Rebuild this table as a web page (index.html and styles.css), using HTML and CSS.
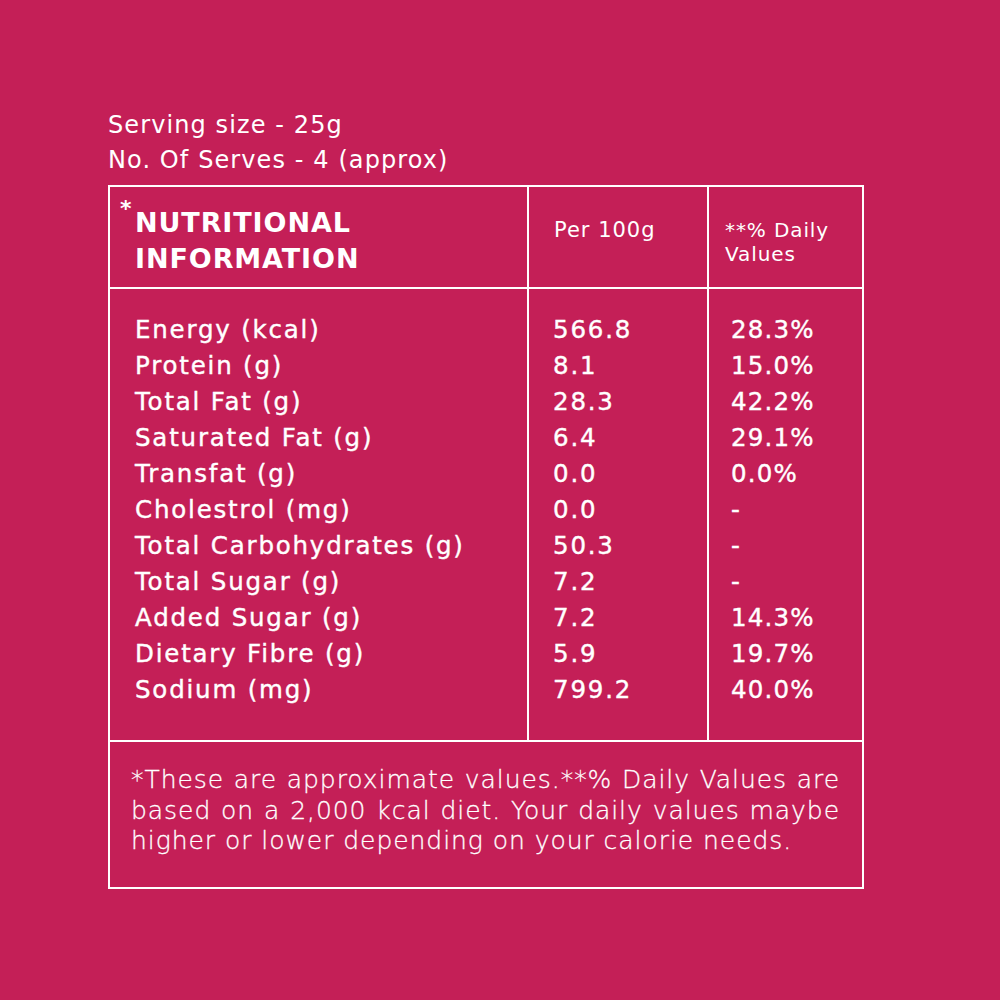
FILE: index.html
```html
<!DOCTYPE html>
<html>
<head>
<meta charset="utf-8">
<link rel="stylesheet" href="styles.css">
</head>
<body>
<div class="page">
  <div class="serving">
    <div>Serving size - 25g</div>
    <div>No. Of Serves - 4 (approx)</div>
  </div>
  <div class="panel">
    <div class="row head">
      <div class="cell c1"><span class="star">*</span><span class="title">NUTRITIONAL<br>INFORMATION</span></div>
      <div class="cell c2"><span class="sub">Per 100g</span></div>
      <div class="cell c3"><span class="sub dv">**% Daily<br>Values</span></div>
    </div>
    <div class="row body">
      <div class="cell c1 list">
        <div>Energy (kcal)</div>
        <div>Protein (g)</div>
        <div>Total Fat (g)</div>
        <div>Saturated Fat (g)</div>
        <div>Transfat (g)</div>
        <div>Cholestrol (mg)</div>
        <div>Total Carbohydrates (g)</div>
        <div>Total Sugar (g)</div>
        <div>Added Sugar (g)</div>
        <div>Dietary Fibre (g)</div>
        <div>Sodium (mg)</div>
      </div>
      <div class="cell c2 list">
        <div>566.8</div>
        <div>8.1</div>
        <div>28.3</div>
        <div>6.4</div>
        <div>0.0</div>
        <div>0.0</div>
        <div>50.3</div>
        <div>7.2</div>
        <div>7.2</div>
        <div>5.9</div>
        <div>799.2</div>
      </div>
      <div class="cell c3 list pct">
        <div>28.3%</div>
        <div>15.0%</div>
        <div>42.2%</div>
        <div>29.1%</div>
        <div>0.0%</div>
        <div>-</div>
        <div>-</div>
        <div>-</div>
        <div>14.3%</div>
        <div>19.7%</div>
        <div>40.0%</div>
      </div>
    </div>
    <div class="foot">
      <p><span class="jl">*These are approximate values.**% Daily Values are</span><span class="jl">based on a 2,000 kcal diet. Your daily values maybe</span><span class="ll">higher or lower depending on your calorie needs.</span></p>
    </div>
  </div>
</div>
</body>
</html>
```
FILE: styles.css
```css
html, body {
  margin: 0;
  padding: 0;
  background: #c41f57;
}
body {
  width: 1000px;
  height: 1000px;
  color: #ffffff;
  font-family: "DejaVu Sans", "Liberation Sans", sans-serif;
}
.page {
  padding: 108px 0 0 108px;
}
.serving {
  font-size: 24px;
  line-height: 35px;
  font-weight: 400;
  margin-bottom: 7px;
  letter-spacing: 1.1px;
}
.panel {
  width: 752px;
  border: 2px solid #fff;
}
.row {
  display: grid;
  grid-template-columns: 419px 180px 1fr;
}
.head {
  height: 100px;
  border-bottom: 2px solid #fff;
}
.cell.c1, .cell.c2 {
  border-right: 2px solid #fff;
}
.head .c1 {
  position: relative;
  padding: 18px 0 0 25px;
}
.star {
  position: absolute;
  left: 10px;
  top: 9px;
  font-size: 22px;
  font-weight: 700;
}
.title {
  display: block;
  font-size: 27px;
  line-height: 36px;
  font-weight: 700;
  letter-spacing: 0.9px;
}
.sub {
  display: block;
  font-size: 21px;
  line-height: 24px;
  font-weight: 400;
  padding: 31px 0 0 25px;
  letter-spacing: 1px;
}
.sub.dv {
  padding: 31px 0 0 16px;
  font-size: 20px;
  letter-spacing: 0.9px;
}
.body {
  height: 451px;
  border-bottom: 2px solid #fff;
}
.list {
  padding-top: 23px;
  font-size: 24.5px;
  line-height: 36px;
  font-weight: 400;
  letter-spacing: 1.8px;
  -webkit-text-stroke: 0.4px #fff;
}
.c1.list { padding-left: 25px; }
.c2.list { padding-left: 24px; }
.c3.list { padding-left: 22px; }
.pct { letter-spacing: 1.2px; }
.foot {
  height: 145px;
  padding: 0 22px 0 21px;
}
.foot p {
  margin: 0;
  padding-top: 23px;
  font-family: "DejaVu Sans", "Liberation Sans", sans-serif;
  font-size: 25px;
  line-height: 30.5px;
  font-weight: 200;
  letter-spacing: 0.95px;
  -webkit-text-stroke: 0.3px #fff;
}
.jl {
  display: block;
  text-align: justify;
  text-align-last: justify;
  white-space: nowrap;
}
.ll {
  display: block;
  white-space: nowrap;
}
```
